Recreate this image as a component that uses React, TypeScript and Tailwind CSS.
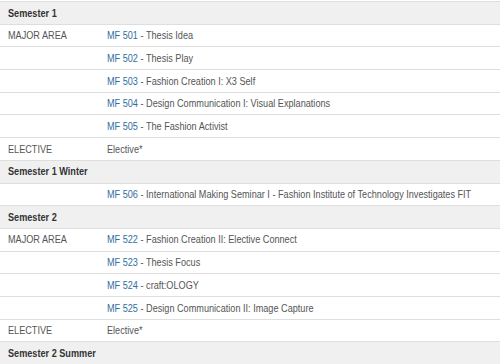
const rows: Array<
  | { kind: 'head'; label: string }
  | { kind: 'course'; area?: string; code?: string; title: string }
> = [
  { kind: 'head', label: 'Semester 1' },
  { kind: 'course', area: 'MAJOR AREA', code: 'MF 501', title: 'Thesis Idea' },
  { kind: 'course', code: 'MF 502', title: 'Thesis Play' },
  { kind: 'course', code: 'MF 503', title: 'Fashion Creation I: X3 Self' },
  { kind: 'course', code: 'MF 504', title: 'Design Communication I: Visual Explanations' },
  { kind: 'course', code: 'MF 505', title: 'The Fashion Activist' },
  { kind: 'course', area: 'ELECTIVE', title: 'Elective*' },
  { kind: 'head', label: 'Semester 1 Winter' },
  { kind: 'course', code: 'MF 506', title: 'International Making Seminar I - Fashion Institute of Technology Investigates FIT' },
  { kind: 'head', label: 'Semester 2' },
  { kind: 'course', area: 'MAJOR AREA', code: 'MF 522', title: 'Fashion Creation II: Elective Connect' },
  { kind: 'course', code: 'MF 523', title: 'Thesis Focus' },
  { kind: 'course', code: 'MF 524', title: 'craft:OLOGY' },
  { kind: 'course', code: 'MF 525', title: 'Design Communication II: Image Capture' },
  { kind: 'course', area: 'ELECTIVE', title: 'Elective*' },
  { kind: 'head', label: 'Semester 2 Summer' },
];

// narrow face isn't installed, so squeeze Liberation Sans horizontally
const narrow = 'inline-block whitespace-nowrap origin-left scale-x-[0.83]';

export default function App() {
  return (
    <div
      className="w-[500px] h-[364px] overflow-hidden bg-white pt-[1px] text-[11px] text-[#555]"
      style={{ fontFamily: '"Liberation Sans", Arial, sans-serif' }}
    >
      <div className="border-t border-[#dedede]">
        {rows.map((r, i) =>
          r.kind === 'head' ? (
            <div
              key={i}
              className="h-[22.7px] flex items-center px-2 bg-[#f0f0f0] border-b border-[#dedede] font-bold text-[#333]"
            >
              <span className={narrow}>{r.label}</span>
            </div>
          ) : (
            <div key={i} className="h-[22.7px] flex items-center border-b border-[#dedede]">
              <div className="w-[107px] shrink-0 pl-2">
                <span className={narrow}>{r.area}</span>
              </div>
              <div className="min-w-0">
                <span className={narrow}>
                  {r.code && (
                    <>
                      <span className="text-[#2f6f9f]">{r.code}</span>
                      {' - '}
                    </>
                  )}
                  {r.title}
                </span>
              </div>
            </div>
          )
        )}
      </div>
    </div>
  );
}
